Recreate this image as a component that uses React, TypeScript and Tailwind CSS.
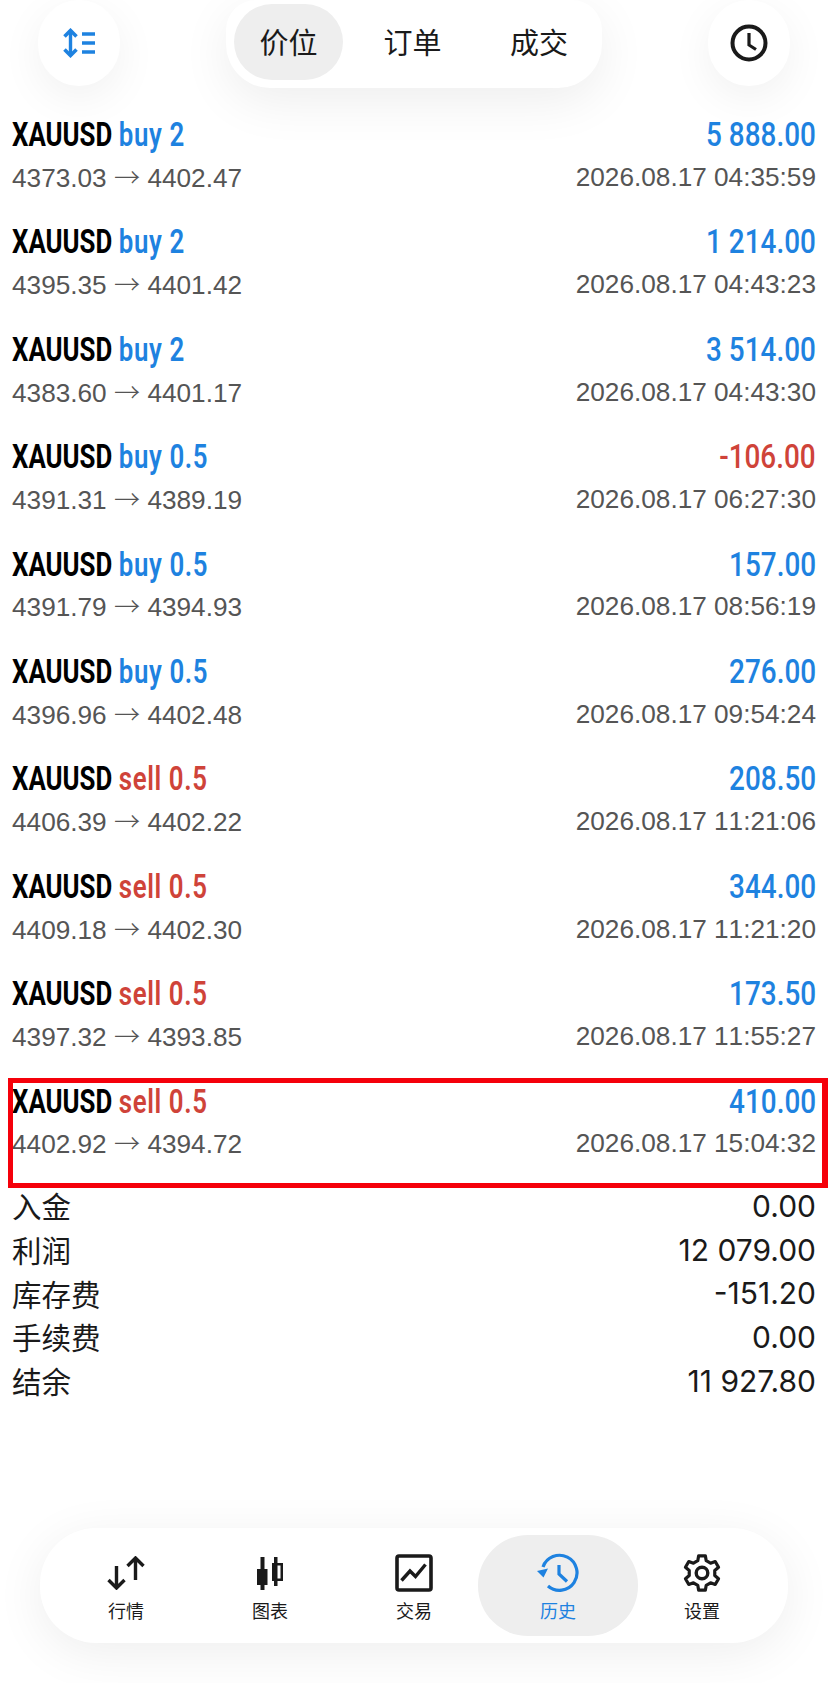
const cjk = "font-['Noto_Sans_CJK_SC',sans-serif]";

interface Trade {
  side: "buy" | "sell";
  lots: string;
  profit: string;
  open: string;
  close: string;
  time: string;
  boxed?: boolean;
}

const trades: Trade[] = [
  { side: "buy", lots: "2", profit: "5 888.00", open: "4373.03", close: "4402.47", time: "2026.08.17 04:35:59" },
  { side: "buy", lots: "2", profit: "1 214.00", open: "4395.35", close: "4401.42", time: "2026.08.17 04:43:23" },
  { side: "buy", lots: "2", profit: "3 514.00", open: "4383.60", close: "4401.17", time: "2026.08.17 04:43:30" },
  { side: "buy", lots: "0.5", profit: "-106.00", open: "4391.31", close: "4389.19", time: "2026.08.17 06:27:30" },
  { side: "buy", lots: "0.5", profit: "157.00", open: "4391.79", close: "4394.93", time: "2026.08.17 08:56:19" },
  { side: "buy", lots: "0.5", profit: "276.00", open: "4396.96", close: "4402.48", time: "2026.08.17 09:54:24" },
  { side: "sell", lots: "0.5", profit: "208.50", open: "4406.39", close: "4402.22", time: "2026.08.17 11:21:06" },
  { side: "sell", lots: "0.5", profit: "344.00", open: "4409.18", close: "4402.30", time: "2026.08.17 11:21:20" },
  { side: "sell", lots: "0.5", profit: "173.50", open: "4397.32", close: "4393.85", time: "2026.08.17 11:55:27" },
  { side: "sell", lots: "0.5", profit: "410.00", open: "4402.92", close: "4394.72", time: "2026.08.17 15:04:32", boxed: true },
];

const summary = [
  ["入金", "0.00"],
  ["利润", "12 079.00"],
  ["库存费", "-151.20"],
  ["手续费", "0.00"],
  ["结余", "11 927.80"],
];

function TradeRow({ trade }: { trade: Trade }) {
  const sideColor = trade.side === "buy" ? "text-[#1e82e0]" : "text-[#cf4339]";
  const profitColor = trade.profit.startsWith("-") ? "text-[#cf4339]" : "text-[#1e82e0]";
  return (
    <div className="relative h-[107.4px] px-3 pt-[6px] font-['Roboto',sans-serif]">
      <div className="flex h-[36px] items-center justify-between text-[34px] leading-none font-medium">
        <span className="origin-left scale-x-[0.76] whitespace-nowrap font-bold text-black">
          XAUUSD <span className={`${sideColor} font-semibold tracking-[0.8px]`}>{trade.side} {trade.lots}</span>
        </span>
        <span className={`origin-right scale-x-[0.82] whitespace-pre ${profitColor}`}>{trade.profit}</span>
      </div>
      <div className="mt-[7px] flex h-[36px] items-center justify-between font-['Liberation_Sans',sans-serif] text-[26.2px] leading-none text-[#555555] [font-kerning:none]">
        <span className="whitespace-pre">
          {trade.open} <span className={`${cjk} font-light`}>→</span> {trade.close}
        </span>
        <span>{trade.time}</span>
      </div>
      {trade.boxed && (
        <div className="absolute top-[1px] right-0 bottom-[-4px] left-2 border-[5px] border-r-[6px] border-[#f5000a]" />
      )}
    </div>
  );
}

function SortIcon() {
  return (
    <svg width="32" height="30" viewBox="0 0 32 30" fill="none" stroke="#1e82e0">
      <path d="M7.5 2V28" strokeWidth="3.4" />
      <path d="M1.5 8.5 7.5 2.5 13.5 8.5M1.5 21.5 7.5 27.5 13.5 21.5" strokeWidth="3.6" />
      <path d="M19 6H32M19 15H32M19 24H32" strokeWidth="3.6" />
    </svg>
  );
}

function ClockIcon() {
  return (
    <svg width="38" height="38" viewBox="0 0 38 38" fill="none" stroke="#1a1a1a">
      <circle cx="19" cy="19" r="16.5" strokeWidth="4" />
      <path d="M19 9V21L26 25.5" strokeWidth="3.2" />
    </svg>
  );
}

function QuotesIcon() {
  return (
    <svg width="38" height="34" viewBox="0 0 38 34" fill="none" stroke="#1a1a1a" strokeWidth="3.4">
      <path d="M9.5 10V32M1.5 24 9.5 32 17.5 24" />
      <path d="M28.5 24V2M20.5 10 28.5 2 36.5 10" />
    </svg>
  );
}

function ChartIcon() {
  return (
    <svg width="27" height="33" viewBox="0 0 27 33" fill="#1a1a1a">
      <rect x="3.5" y="0" width="4" height="33" />
      <rect x="0" y="12" width="10.5" height="16" />
      <rect x="17" y="0" width="3.5" height="29" />
      <path fillRule="evenodd" d="M15 6H26V24H15ZM17.5 8.5V21.5H23.5V8.5Z" />
    </svg>
  );
}

function TradeIcon() {
  return (
    <svg width="38" height="38" viewBox="0 0 38 38" fill="none" stroke="#1a1a1a">
      <rect x="2" y="2" width="34" height="34" rx="2" strokeWidth="3.6" />
      <path d="M6.5 26.5 15 17 20.5 22.5 30.5 10.5" strokeWidth="3.4" />
    </svg>
  );
}

function HistoryIcon() {
  return (
    <svg width="42" height="40" viewBox="0 0 42 40" fill="none" stroke="#1e82e0">
      <path d="M6 14A17.5 17.5 0 1 1 11 33" strokeWidth="3.2" />
      <path d="M0 18 11 15.5 6.5 24.5Z" fill="#1e82e0" stroke="none" />
      <path d="M22 12V21L30 28.5" strokeWidth="3.2" />
    </svg>
  );
}

// six tooth gear, teeth point straight up and down
function gearPath(outer: number, inner: number) {
  const points: string[] = [];
  for (let i = 0; i < 6; i++) {
    const a = -90 + i * 60;
    const corners: [number, number][] = [
      [inner, a - 19],
      [outer, a - 11],
      [outer, a + 11],
      [inner, a + 19],
    ];
    for (const [r, deg] of corners) {
      const rad = (deg * Math.PI) / 180;
      points.push(`${(20 + r * Math.cos(rad)).toFixed(2)} ${(20 + r * Math.sin(rad)).toFixed(2)}`);
    }
  }
  return `M${points.join("L")}Z`;
}

function GearIcon() {
  return (
    <svg width="40" height="40" viewBox="0 0 40 40" fill="none" stroke="#1a1a1a">
      <path d={gearPath(17.5, 13)} strokeWidth="3.2" strokeLinejoin="round" />
      <circle cx="20" cy="20" r="5.8" strokeWidth="3.4" />
    </svg>
  );
}

const navItems = [
  { label: "行情", icon: <QuotesIcon /> },
  { label: "图表", icon: <ChartIcon /> },
  { label: "交易", icon: <TradeIcon /> },
  { label: "历史", icon: <HistoryIcon />, active: true },
  { label: "设置", icon: <GearIcon /> },
];

export default function App() {
  return (
    <div className="flex h-[1683px] w-[828px] flex-col overflow-hidden bg-white">
      {/* Top bar */}
      <div className="relative flex h-[110px] shrink-0 items-start justify-between px-[38px]">
        <button className="flex h-[86px] w-[82px] items-center justify-center rounded-full bg-white shadow-[0_12px_44px_rgba(0,0,0,0.06)]">
          <SortIcon />
        </button>
        <div
          className={`flex h-[88px] w-[376px] items-start rounded-b-[44px] rounded-t-[30px] bg-white pt-1 pl-2 shadow-[0_14px_50px_rgba(0,0,0,0.07)] ${cjk} text-[29px] text-[#1a1a1a]`}
        >
          <div className="mr-[6px] flex h-[76px] w-[109px] items-center justify-center rounded-[38px] bg-[#eeeeee]">价位</div>
          <div className="flex h-[76px] w-[127px] items-center justify-center">订单</div>
          <div className="flex h-[76px] w-[126px] items-center justify-center">成交</div>
        </div>
        <button className="flex h-[86px] w-[82px] items-center justify-center rounded-full bg-white shadow-[0_12px_44px_rgba(0,0,0,0.06)]">
          <ClockIcon />
        </button>
      </div>

      {/* Deals */}
      <div className="relative shrink-0">
        {trades.map((trade) => (
          <TradeRow key={trade.time} trade={trade} />
        ))}
      </div>

      {/* Totals */}
      <div className="shrink-0 px-3">
        {summary.map(([label, value]) => (
          <div key={label} className="flex h-[43.8px] items-center justify-between text-[#1a1a1a]">
            <span className={`${cjk} text-[29.5px] leading-none`}>{label}</span>
            <span className="whitespace-pre font-['Inter',sans-serif] text-[30px] leading-none">{value}</span>
          </div>
        ))}
      </div>

      {/* Bottom nav */}
      <div className="mx-[40px] mt-auto mb-[40px] flex h-[115px] shrink-0 items-center rounded-[56px] bg-white px-[14px] shadow-[0_10px_50px_rgba(0,0,0,0.07)]">
        {navItems.map((item) => (
          <div
            key={item.label}
            className={`relative flex h-[101px] flex-1 flex-col items-center justify-start pt-[16px] ${item.active ? "text-[#1e82e0]" : "text-[#1a1a1a]"}`}
          >
            {item.active && <div className="absolute inset-y-0 -inset-x-2 rounded-[50px] bg-[#eeeeee]" />}
            <div className="relative flex h-[44px] items-center">{item.icon}</div>
            <span className={`${cjk} relative mt-[2px] text-[18px] leading-[26px]`}>{item.label}</span>
          </div>
        ))}
      </div>
    </div>
  );
}
